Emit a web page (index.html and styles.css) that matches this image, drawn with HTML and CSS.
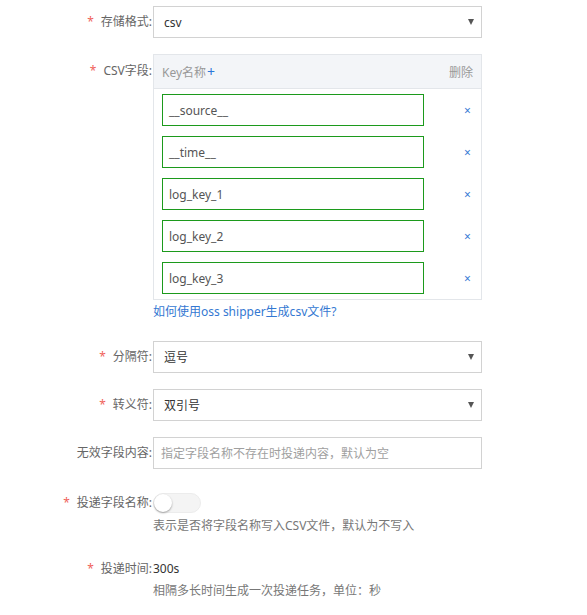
FILE: index.html
```html
<!DOCTYPE html>
<html lang="zh">
<head>
<meta charset="utf-8">
<link rel="stylesheet" href="styles.css">
</head>
<body>
<div class="form">
  <div class="item item-select">
    <div class="label"><span class="req">*</span>存储格式:</div>
    <div class="control">
      <div class="select"><span>csv</span><span class="caret"></span></div>
    </div>
  </div>

  <div class="item item-table">
    <div class="label label-table"><span class="req">*</span>CSV字段:</div>
    <div class="control">
      <div class="table">
        <div class="thead">
          <span class="th-key">Key名称<span class="plus">+</span></span>
          <span class="th-del">删除</span>
        </div>
        <div class="tbody">
          <div class="trow"><div class="key-input">__source__</div><span class="del">×</span></div>
          <div class="trow"><div class="key-input">__time__</div><span class="del">×</span></div>
          <div class="trow"><div class="key-input">log_key_1</div><span class="del">×</span></div>
          <div class="trow"><div class="key-input">log_key_2</div><span class="del">×</span></div>
          <div class="trow"><div class="key-input">log_key_3</div><span class="del">×</span></div>
        </div>
      </div>
      <a class="link">如何使用oss shipper生成csv文件?</a>
    </div>
  </div>

  <div class="item item-select item-sep">
    <div class="label"><span class="req">*</span>分隔符:</div>
    <div class="control">
      <div class="select"><span>逗号</span><span class="caret"></span></div>
    </div>
  </div>

  <div class="item item-select">
    <div class="label"><span class="req">*</span>转义符:</div>
    <div class="control">
      <div class="select"><span>双引号</span><span class="caret"></span></div>
    </div>
  </div>

  <div class="item item-select">
    <div class="label">无效字段内容:</div>
    <div class="control">
      <div class="text-input placeholder">指定字段名称不存在时投递内容，默认为空</div>
    </div>
  </div>

  <div class="item item-toggle">
    <div class="label"><span class="req">*</span>投递字段名称:</div>
    <div class="control">
      <div class="switch"><span class="knob"></span></div>
      <div class="help">表示是否将字段名称写入CSV文件，默认为不写入</div>
    </div>
  </div>

  <div class="item item-time">
    <div class="label"><span class="req">*</span>投递时间:</div>
    <div class="control">
      <div class="value">300s</div>
      <div class="help help-time">相隔多长时间生成一次投递任务，单位：秒</div>
    </div>
  </div>
</div>
</body>
</html>
```

FILE: styles.css
```css
* { box-sizing: border-box; }
html, body {
  margin: 0;
  padding: 0;
  background: #fff;
}
body {
  font-family: "Noto Sans", "Noto Sans CJK SC", sans-serif;
  font-size: 12px;
  color: #333;
  width: 587px;
  height: 615px;
  overflow: hidden;
}
.form {
  padding-top: 6px;
}
.item {
  display: grid;
  grid-template-columns: 153px 329px;
  margin-bottom: 16px;
}
.label {
  text-align: right;
  padding-right: 1px;
  color: #666;
  line-height: 32px;
  white-space: nowrap;
}
.req {
  color: #f0625a;
  margin-right: 7px;
}
.label-table {
  line-height: 34px;
}
.select, .text-input {
  height: 32px;
  border: 1px solid #d2d2d2;
  display: flex;
  align-items: center;
  justify-content: space-between;
  padding: 0 7px 0 10px;
  color: #333;
  background: #fff;
}
.text-input { padding-left: 7px; }
.placeholder { color: #a0a0a0; }
.caret {
  width: 0;
  height: 0;
  border-left: 3.5px solid transparent;
  border-right: 3.5px solid transparent;
  border-top: 6px solid #555;
}
.table {
  border: 1px solid #e3e6ea;
  background: #fff;
}
.thead {
  height: 34px;
  background: #f3f5f8;
  border-bottom: 1px solid #e3e6ea;
  display: flex;
  justify-content: space-between;
  align-items: center;
  padding: 0 8px 0 8px;
  color: #999;
}
.plus {
  color: #2a78d8;
  font-size: 14px;
  margin-left: 1px;
}
.tbody {
  padding: 5px 0 5px 8px;
  display: flex;
  flex-direction: column;
  gap: 10px;
}
.trow {
  display: flex;
  align-items: center;
}
.key-input {
  width: 262px;
  height: 32px;
  border: 1px solid #1c9a1c;
  padding-left: 6px;
  display: flex;
  align-items: center;
  color: #555;
}
.del {
  color: #3a7bd5;
  margin-left: 40px;
  font-size: 12px;
}
.link {
  display: block;
  color: #3478d2;
  line-height: 20px;
  margin-top: 2px;
}
.item-sep {
  margin-top: 19px;
}
.item-toggle {
  margin-top: 24px;
  margin-bottom: 0;
}
.item-toggle .label {
  line-height: 20px;
}
.switch {
  width: 48px;
  height: 20px;
  border-radius: 10px;
  background: #f4f4f4;
  border: 1px solid #ececec;
  position: relative;
}
.knob {
  position: absolute;
  left: 0;
  top: 0;
  width: 18px;
  height: 18px;
  border-radius: 50%;
  background: #fff;
  box-shadow: 0 1px 2px rgba(0,0,0,0.35);
}
.help {
  color: #777;
  line-height: 20px;
  margin-top: 3px;
}
.item-time {
  margin-top: 23px;
}
.item-time .label {
  line-height: 20px;
}
.value {
  line-height: 20px;
  color: #333;
}
.help-time {
  margin-top: 2px;
}
```
